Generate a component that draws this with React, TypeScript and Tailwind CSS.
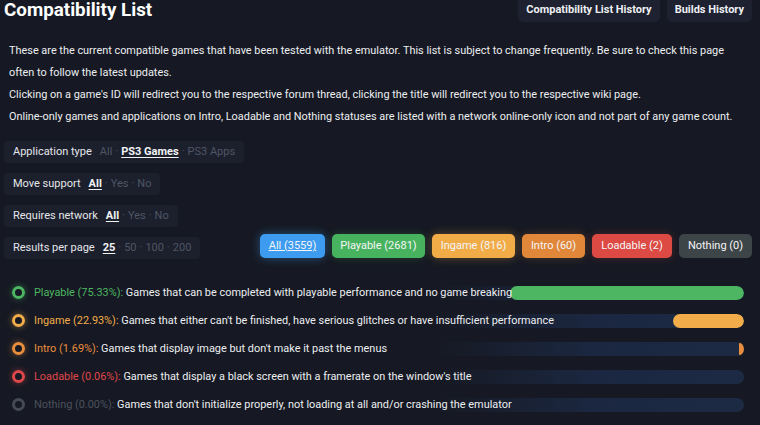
import React from "react";

const font = { fontFamily: "Roboto, 'Noto Sans', sans-serif" };

function Filter({ label, options, active }: { label: string; options: string[]; active: number }) {
  return (
    <div className="flex h-[22px] w-fit shrink-0 items-center gap-[8px] whitespace-nowrap rounded-[4px] bg-[#1c202d] pl-[9px] pr-[9px] text-[11px]">
      <span className="text-[#e4e6ea]">{label}</span>
      <span className="flex items-center gap-[3px]">
        {options.map((o, i) => (
          <React.Fragment key={o}>
            {i > 0 && <span className="text-[#4a4f5c]">·</span>}
            <span
              className={
                i === active
                  ? "font-bold text-[#f2f3f5] underline underline-offset-2"
                  : "text-[#4f5564]"
              }
            >
              {o}
            </span>
          </React.Fragment>
        ))}
      </span>
    </div>
  );
}

const statuses = [
  { label: "All (3559)", cls: "bg-[#3d9cf0] shadow-[0_0_10px_rgba(61,156,240,0.45)] underline", w: "w-[65px]" },
  { label: "Playable (2681)", cls: "bg-[#48b35e] shadow-[0_0_8px_rgba(72,179,94,0.25)]", w: "w-[93px]" },
  { label: "Ingame (816)", cls: "bg-[#f1ac48] shadow-[0_0_10px_rgba(241,172,72,0.35)]", w: "w-[83px]" },
  { label: "Intro (60)", cls: "bg-[#e0873a] shadow-[0_0_8px_rgba(224,135,58,0.25)]", w: "w-[63px]" },
  { label: "Loadable (2)", cls: "bg-[#dc4a43] shadow-[0_0_8px_rgba(220,74,67,0.25)]", w: "w-[80px]" },
  { label: "Nothing (0)", cls: "bg-[#3e4548]", w: "w-[73px]" },
];

const legend = [
  {
    name: "Playable (75.33%):",
    desc: " Games that can be completed with playable performance and no game breaking",
    color: "text-[#4cb662]",
    ring: "border-[#4cb662] shadow-[0_0_6px_rgba(76,182,98,0.5)]",
    fill: "bg-[#4cb662]",
    pct: 75.33,
  },
  {
    name: "Ingame (22.93%):",
    desc: " Games that either can't be finished, have serious glitches or have insufficient performance",
    color: "text-[#f2ad4a]",
    ring: "border-[#f2ad4a] shadow-[0_0_6px_rgba(242,173,74,0.5)]",
    fill: "bg-[#f2ad4a]",
    pct: 22.93,
  },
  {
    name: "Intro (1.69%):",
    desc: " Games that display image but don't make it past the menus",
    color: "text-[#e98e3d]",
    ring: "border-[#e98e3d] shadow-[0_0_6px_rgba(233,142,61,0.5)]",
    fill: "bg-[#e98e3d]",
    pct: 1.69,
  },
  {
    name: "Loadable (0.06%):",
    desc: " Games that display a black screen with a framerate on the window's title",
    color: "text-[#e0474a]",
    ring: "border-[#e0474a] shadow-[0_0_6px_rgba(224,71,74,0.5)]",
    fill: "bg-[#e0474a]",
    pct: 0.06,
  },
  {
    name: "Nothing (0.00%):",
    desc: " Games that don't initialize properly, not loading at all and/or crashing the emulator",
    color: "text-[#4b505c]",
    ring: "border-[#454a55]",
    fill: "bg-[#454a55]",
    pct: 0,
  },
];

export default function App() {
  return (
    <div className="h-[425px] w-[760px] overflow-hidden bg-[#161923] text-[#e8e9ec]" style={font}>
      <div className="flex items-start justify-between pl-[4px] pr-[8px]">
        <h1 className="pt-[1px] text-[18.8px] font-bold leading-none text-white">Compatibility List</h1>
        <div className="-mt-[5px] flex gap-[7px]">
          <div className="flex h-[27px] items-center rounded-[5px] bg-[#1d2130] px-[8px] pt-[3px] text-[11px] font-bold text-[#eef0f3]">
            Compatibility List History
          </div>
          <div className="flex h-[27px] items-center rounded-[5px] bg-[#1d2130] px-[8px] pt-[3px] text-[11px] font-bold text-[#eef0f3]">
            Builds History
          </div>
        </div>
      </div>

      <div className="mt-[18px] pl-[9px] pr-[14px] text-[10.9px] leading-[22px] text-[#eceef1]">
        <p>
          These are the current compatible games that have been tested with the emulator. This list is subject to change frequently. Be sure to check this page{" "}
          <br />
          often to follow the latest updates.
        </p>
        <p>Clicking on a game's ID will redirect you to the respective forum thread, clicking the title will redirect you to the respective wiki page.</p>
        <p className="whitespace-nowrap">Online-only games and applications on Intro, Loadable and Nothing statuses are listed with a network online-only icon and not part of any game count.</p>
      </div>

      <div className="mt-[13px] flex items-end justify-between pl-[4px] pr-[8px]">
        <div className="flex shrink-0 flex-col gap-[10px]">
          <Filter label="Application type" options={["All", "PS3 Games", "PS3 Apps"]} active={1} />
          <Filter label="Move support" options={["All", "Yes", "No"]} active={0} />
          <Filter label="Requires network" options={["All", "Yes", "No"]} active={0} />
          <Filter label="Results per page" options={["25", "50", "100", "200"]} active={0} />
        </div>
        <div className="mb-[1px] flex gap-[7px]">
          {statuses.map((s) => (
            <div
              key={s.label}
              className={`flex h-[24px] items-center justify-center rounded-[5px] text-[11px] text-[#f4f5f7] ${s.cls} ${s.w}`}
            >
              {s.label}
            </div>
          ))}
        </div>
      </div>

      <div className="mt-[20px] flex flex-col pl-[12px] pr-[16px]">
        {legend.map((l) => (
          <div key={l.name} className="grid h-[28px] items-center">
            <div className="z-10 flex items-center gap-[9px] [grid-area:1/1]">
              <div className={`h-[13px] w-[13px] rounded-full border-[3px] ${l.ring}`} />
              <span className="whitespace-nowrap text-[10.9px] text-[#eceef1]">
                <span className={l.color}>{l.name}</span>
                {l.desc}
              </span>
            </div>
            <div className="flex h-[14px] w-[310px] justify-end justify-self-end overflow-hidden rounded-full bg-gradient-to-r from-transparent via-[#1b2740] to-[#1c2a43] [grid-area:1/1]">
              {l.pct > 0 && (
                <div className={`h-full rounded-full ${l.fill}`} style={{ width: `${l.pct}%` }} />
              )}
            </div>
          </div>
        ))}
      </div>
    </div>
  );
}
